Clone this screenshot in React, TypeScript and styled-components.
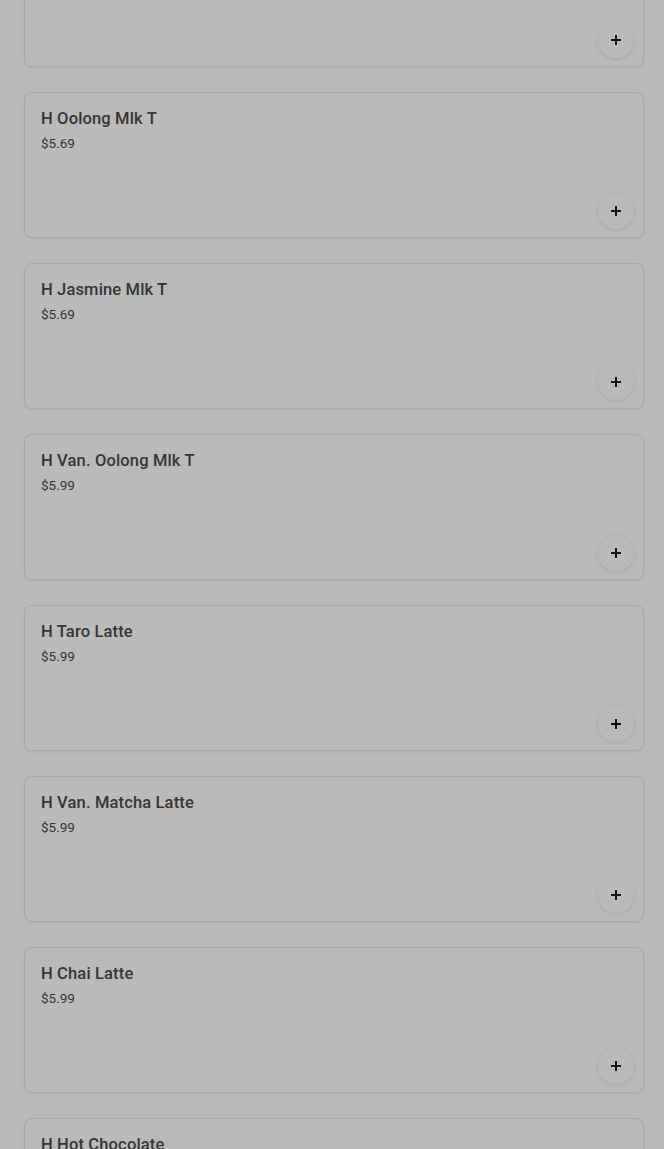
import React from "react";
import styled, {createGlobalStyle} from "styled-components";

const GlobalStyle = createGlobalStyle`
  html, body {
    margin: 0;
    padding: 0;
    background: #ffffff;
    font-family: Roboto, "Noto Sans", Arial, sans-serif;
    overflow: hidden;
  }
`;

interface Item {
    name: string
    price: string
}

const items: Item[] = [
    {name: "H Brown Sugar Mlk T", price: "$5.99"},
    {name: "H Oolong Mlk T", price: "$5.69"},
    {name: "H Jasmine Mlk T", price: "$5.69"},
    {name: "H Van. Oolong Mlk T", price: "$5.99"},
    {name: "H Taro Latte", price: "$5.99"},
    {name: "H Van. Matcha Latte", price: "$5.99"},
    {name: "H Chai Latte", price: "$5.99"},
    {name: "H Hot Chocolate", price: "$5.99"},
];

const List = styled.div`
  display: flex;
  flex-direction: column;
  gap: 25px;
  margin-top: -79px;
  padding: 0 20px 0 24px;
`;

const Card = styled.div`
  box-sizing: border-box;
  height: 146px;
  border: 1px solid #e8e8e8;
  border-radius: 8px;
  box-shadow: 0 1px 3px rgba(0, 0, 0, 0.06);
  background: #ffffff;
  padding: 16px 9px 8px 16px;
  display: flex;
  flex-direction: column;
`;

const Name = styled.div`
  font-size: 16.5px;
  font-weight: 500;
  line-height: 20px;
  color: #4a4a4a;
  letter-spacing: 0.15px;
`;

const Price = styled.div`
  margin-top: 6px;
  font-size: 13.5px;
  line-height: 16px;
  color: #4a4a4a;
`;

const Footer = styled.div`
  margin-top: auto;
  display: flex;
  justify-content: flex-end;
`;

const AddButton = styled.button`
  width: 36px;
  height: 36px;
  border-radius: 50%;
  border: none;
  background: #ffffff;
  box-shadow: 0 1px 4px rgba(0, 0, 0, 0.1);
  display: flex;
  align-items: center;
  justify-content: center;
  padding: 0;
  cursor: pointer;
`;

const Backdrop = styled.div`
  position: fixed;
  inset: 0;
  background: rgba(0, 0, 0, 0.27);
`;

function PlusIcon() {
    return (
        <svg width="12" height="12" viewBox="0 0 12 12">
            <path d="M6 1v10M1 6h10" stroke="#1a1a1a" strokeWidth="2"/>
        </svg>
    );
}

export default function App() {
    return (
        <>
            <GlobalStyle/>
            <List>
                {items.map(item => (
                    <Card key={item.name}>
                        <Name>{item.name}</Name>
                        <Price>{item.price}</Price>
                        <Footer>
                            <AddButton aria-label={"Add " + item.name}><PlusIcon/></AddButton>
                        </Footer>
                    </Card>
                ))}
            </List>
            <Backdrop/>
        </>
    );
}
